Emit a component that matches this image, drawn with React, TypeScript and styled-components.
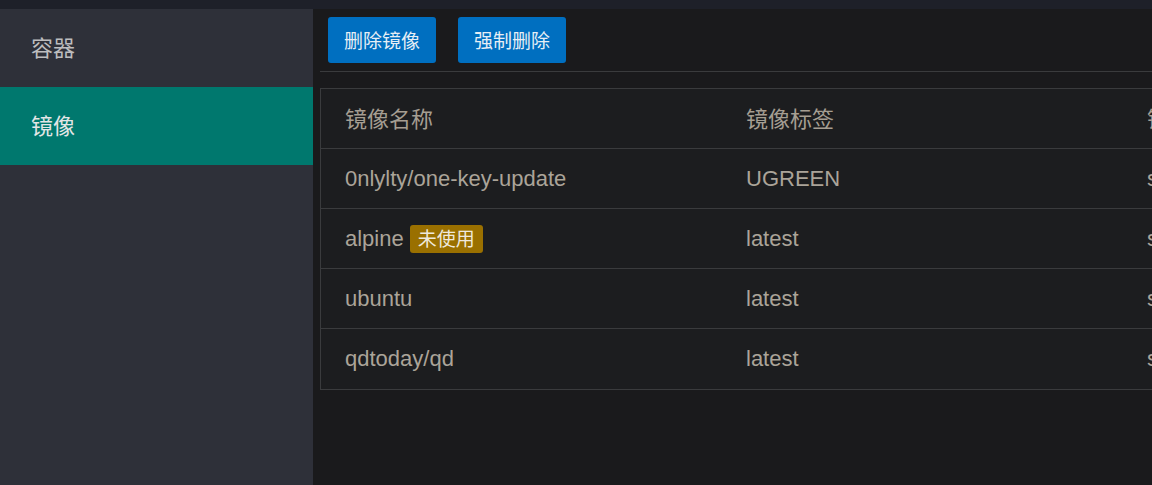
import React from "react";
import styled, { createGlobalStyle } from "styled-components";

const Global = createGlobalStyle`
  html, body { margin: 0; padding: 0; background: #1a1a1c; overflow: hidden; }
  body { font-family: "Liberation Sans", "Noto Sans CJK SC", Arial, sans-serif; }
  * { box-sizing: border-box; }
`;

const TopStrip = styled.div`
  height: 9px;
  background: #1e2029;
`;

const Layout = styled.div`
  display: flex;
  height: 476px;
`;

const Sidebar = styled.nav`
  width: 313px;
  flex-shrink: 0;
  background: #2e3039;
  display: flex;
  flex-direction: column;
`;

const MenuItem = styled.div<{ $active?: boolean }>`
  height: 78px;
  display: flex;
  align-items: center;
  padding: 0 0 5px 31px;
  font-size: 22px;
  font-family: "Noto Sans CJK SC", "Liberation Sans", sans-serif;
  color: ${(p) => (p.$active ? "#e4e6e6" : "#bdbdbf")};
  background: ${(p) => (p.$active ? "#00786e" : "transparent")};
`;

const Main = styled.main`
  flex: 1;
  min-width: 0;
  overflow: hidden;
  padding: 8px 0 0 7px;
  background: #1a1a1c;
`;

const Toolbar = styled.div`
  display: flex;
  gap: 22px;
  padding: 0 0 8px 8px;
  border-bottom: 1px solid #3a3b3d;
`;

const Button = styled.button`
  height: 46px;
  width: 108px;
  border: none;
  border-radius: 3px;
  background: #006fc0;
  color: #e6eef5;
  font-size: 19px;
  font-family: "Noto Sans CJK SC", "Liberation Sans", sans-serif;
  padding: 0 0 2px;
  cursor: pointer;
`;

const Table = styled.div`
  margin-top: 16px;
  width: 1220px;
  border: 1px solid #3a3b3d;
  background: #1c1d1f;
`;

const Row = styled.div<{ $last?: boolean }>`
  display: grid;
  grid-template-columns: 401px 401px 1fr;
  height: 60px;
  align-items: center;
  border-bottom: ${(p) => (p.$last ? "none" : "1px solid #3a3b3d")};
`;

const Cell = styled.div<{ $head?: boolean }>`
  padding-left: 24px;
  padding-bottom: ${(p) => (p.$head ? "3px" : "0")};
  font-size: 22px;
  color: ${(p) => (p.$head ? "#a59e92" : "#aba499")};
  font-family: ${(p) =>
    p.$head
      ? `"Noto Sans CJK SC", "Liberation Sans", sans-serif`
      : `"Liberation Sans", "Noto Sans CJK SC", sans-serif`};
  white-space: nowrap;
  display: flex;
  align-items: center;
  gap: 6px;
`;

const Badge = styled.span`
  display: inline-flex;
  align-items: center;
  height: 28px;
  padding: 0 8px 2px;
  border-radius: 3px;
  background: #9a7000;
  color: #efe9dc;
  font-size: 19px;
  font-family: "Noto Sans CJK SC", sans-serif;
`;

const rows = [
  { name: "0nlylty/one-key-update", tag: "UGREEN", id: "sha256:1f2a", unused: false },
  { name: "alpine", tag: "latest", id: "sha256:8ca4", unused: true },
  { name: "ubuntu", tag: "latest", id: "sha256:2dc3", unused: false },
  { name: "qdtoday/qd", tag: "latest", id: "sha256:9b5e", unused: false },
];

export default function App() {
  return (
    <>
      <Global />
      <TopStrip />
      <Layout>
        <Sidebar>
          <MenuItem>容器</MenuItem>
          <MenuItem $active>镜像</MenuItem>
        </Sidebar>
        <Main>
          <Toolbar>
            <Button>删除镜像</Button>
            <Button>强制删除</Button>
          </Toolbar>
          <Table>
            <Row>
              <Cell $head>镜像名称</Cell>
              <Cell $head>镜像标签</Cell>
              <Cell $head>镜像ID</Cell>
            </Row>
            {rows.map((r, i) => (
              <Row key={r.name} $last={i === rows.length - 1}>
                <Cell>
                  {r.name}
                  {r.unused && <Badge>未使用</Badge>}
                </Cell>
                <Cell>{r.tag}</Cell>
                <Cell>{r.id}</Cell>
              </Row>
            ))}
          </Table>
        </Main>
      </Layout>
    </>
  );
}
